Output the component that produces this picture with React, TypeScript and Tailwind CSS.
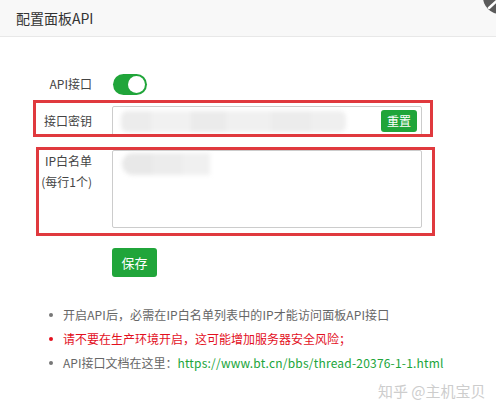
import React from "react";

export default function App() {
  return (
    <div className="relative w-[496px] h-[412px] overflow-hidden bg-white font-['Noto_Sans_CJK_SC','Noto_Sans',sans-serif] text-[12px] text-[#444]">
      {/* header */}
      <div className="h-[37px] bg-[#f8f8f8] border-b border-[#e8e8e8] flex items-center pl-[16px] text-[14px] text-[#333]">
        配置面板API
      </div>
      {/* close button partially visible */}
      <svg className="absolute left-[480px] top-[-20px]" width="40" height="40" viewBox="0 0 40 40">
        <circle cx="20" cy="17" r="17" fill="#5b5b5b" />
        <path d="M9 8 L31 28 M31 8 L9 28" stroke="#ffffff" strokeWidth="2.5" strokeLinecap="round" />
      </svg>

      <div className="flex flex-col pt-[35px]">
        {/* API toggle */}
        <div className="flex items-center h-[24px]">
          <div className="w-[92px] text-right">API接口</div>
          <div className="ml-[21px] w-[34px] h-[21px] rounded-full bg-[#20a53a] flex items-center justify-end pr-[2px]">
            <div className="w-[17px] h-[17px] rounded-full bg-white" />
          </div>
        </div>

        {/* key */}
        <div className="flex items-center mt-[10px]">
          <div className="w-[92px] text-right">接口密钥</div>
          <div className="ml-[20px] w-[310px] h-[30px] border border-[#ccc] rounded-[2px] flex items-center pl-[8px] pr-[4px]">
            <div className="flex h-[21px] w-[225px] blur-[2px] overflow-hidden rounded-[6px]">
              <div className="w-[30px] bg-[#ececec]" />
              <div className="w-[40px] bg-[#f1f1f1]" />
              <div className="w-[35px] bg-[#ebebeb]" />
              <div className="w-[45px] bg-[#f0f0f0]" />
              <div className="w-[40px] bg-[#ececec]" />
              <div className="w-[35px] bg-[#efefef]" />
            </div>
            <div className="ml-auto w-[36px] h-[22px] rounded-[3px] bg-[#20a53a] text-white text-[12px] flex items-center justify-center">
              重置
            </div>
          </div>
        </div>

        {/* ip whitelist */}
        <div className="flex items-start mt-[14px]">
          <div className="w-[92px] text-right leading-[21px]">
            <div>IP白名单</div>
            <div>(每行1个)</div>
          </div>
          <div className="ml-[20px] w-[310px] h-[78px] border border-[#ccc] rounded-[2px] pt-[2px] pl-[9px]">
            <div className="flex h-[22px] w-[88px] blur-[2px] overflow-hidden rounded-l-[11px]">
              <div className="w-[30px] bg-[#e8e8e8]" />
              <div className="w-[30px] bg-[#ececec]" />
              <div className="w-[28px] bg-[#f0f0f0]" />
            </div>
          </div>
        </div>

        {/* save */}
        <div className="flex mt-[20px] pl-[112px]">
          <div className="w-[45px] h-[29px] rounded-[3px] bg-[#20a53a] text-white text-[13px] flex items-center justify-center">
            保存
          </div>
        </div>

        {/* notes */}
        <ul className="mt-[26px] pl-[49px] text-[12px] text-[#666]">
          <li className="flex items-center h-[24px]">
            <span className="w-[4px] h-[4px] rounded-full bg-[#777] mr-[10px]" />
            <span className="tracking-[0.1px]">开启API后，必需在IP白名单列表中的IP才能访问面板API接口</span>
          </li>
          <li className="flex items-center h-[24px] text-[#e3101e]">
            <span className="w-[4px] h-[4px] rounded-full bg-[#e3101e] mr-[10px]" />
            <span>请不要在生产环境开启，这可能增加服务器安全风险；</span>
          </li>
          <li className="flex items-center h-[24px]">
            <span className="w-[4px] h-[4px] rounded-full bg-[#777] mr-[10px]" />
            <span>
              API接口文档在这里：<span className="text-[#20a53a] tracking-[0.2px]">https://www.bt.cn/bbs/thread-20376-1-1.html</span>
            </span>
          </li>
        </ul>
      </div>

      {/* annotation boxes */}
      <div className="absolute left-[33px] top-[100px] w-[400px] h-[37px] border-[3px] border-[#e0393e]" />
      <div className="absolute left-[36px] top-[147px] w-[399px] h-[89px] border-[3px] border-[#e0393e]" />

      {/* watermark */}
      <div className="absolute left-[378px] top-[380px] text-[15px] text-[#cdcdcd]">
        知乎 @主机宝贝
      </div>
    </div>
  );
}
